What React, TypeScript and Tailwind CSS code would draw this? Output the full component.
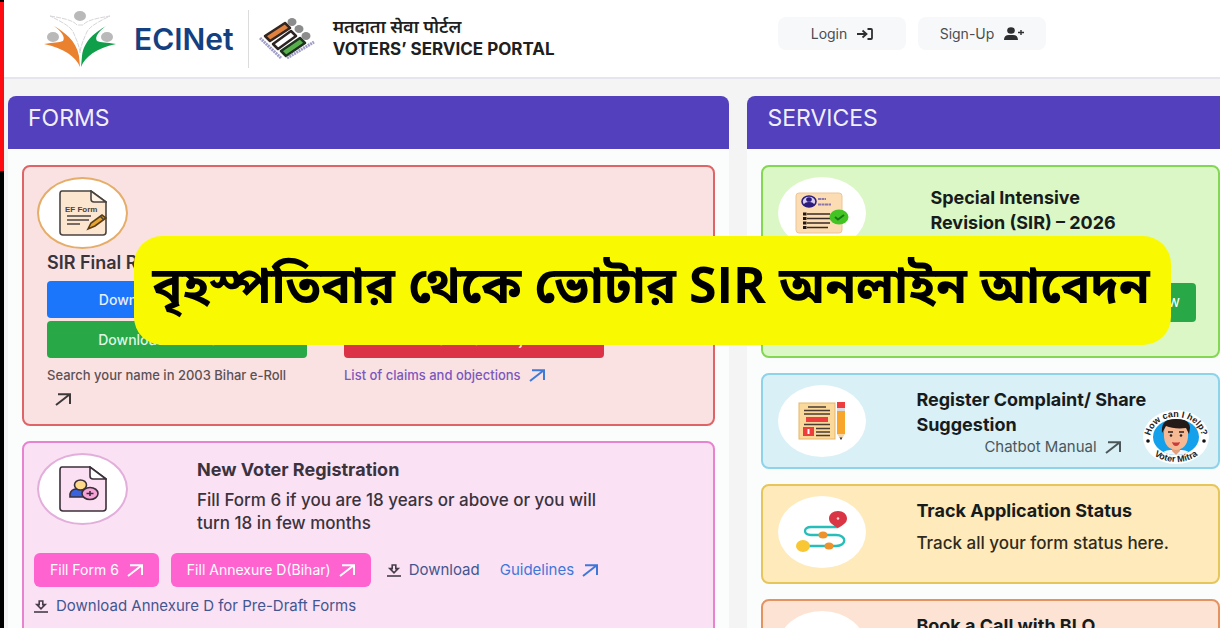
import type {ReactNode} from "react";
import clsx from "clsx";

function ArrowIcon({className}: { className?: string }) {
    return (
        <svg viewBox="0 0 16 13" className={clsx("h-[13px] w-4 shrink-0", className)} fill="none" stroke="currentColor" strokeWidth="2" aria-hidden="true">
            <path d="M1 12 14.5 1.5M3 1.3h12V11" />
        </svg>
    );
}

function DownloadIcon() {
    return (
        <svg viewBox="0 0 14 13" className="h-[13px] w-3.5 shrink-0 text-[#463c4a]" fill="none" stroke="currentColor" aria-hidden="true">
            <path strokeWidth="1.6" d="M5.2 1h3.6v3.6h2.4L7 8.8 2.8 4.6h2.4z" />
            <path strokeWidth="1.6" d="M0 12h14" />
        </svg>
    );
}

function EciLogo() {
    return (
        <svg viewBox="0 0 72 58" className="h-[58px] w-[72px] shrink-0" aria-hidden="true">
            <g fill="#b9b9b9">
                <ellipse cx="36" cy="6" rx="6" ry="5" />
                <ellipse cx="9" cy="27" rx="6" ry="5" />
                <ellipse cx="63" cy="27" rx="6" ry="5" />
            </g>
            <path d="M6 6c12 2 23 4 27 9h6c4-5 15-7 27-9-12 6-22 11-24 18-3 7-5 11-6 19-1-8-3-12-6-19C28 17 18 12 6 6z" fill="#fff" stroke="#d6d6d6" strokeWidth="1" strokeDasharray="5 1" />
            <path d="M10 16c10 6 22 14 25 30l1 11C32 47 20 38 0 34c10-2 15-1 19-3 3-4-3-11-9-15z" fill="#e9812e" />
            <path d="M62 16c-10 6-22 14-24 30l-1 11c4-10 15-19 35-23-10-2-15-1-19-3-3-4 3-11 9-15z" fill="#0f9f4a" />
        </svg>
    );
}

function VoterLogo() {
    return (
        <svg viewBox="0 0 56 44" className="h-11 w-14 shrink-0" aria-hidden="true">
            <g fill="#8c8c8c">
                <ellipse cx="33" cy="5" rx="4.5" ry="4" />
                <ellipse cx="40" cy="12" rx="4.5" ry="4" />
                <ellipse cx="47" cy="19" rx="4.5" ry="4" />
            </g>
            <g strokeWidth="2.5" strokeLinejoin="round">
                <path d="m6 19 20-13 5 5-20 13z" fill="#e08140" stroke="#33251f" />
                <path d="m14 27 18-13 5 5-18 13z" fill="#fff" stroke="#2b2422" />
                <path d="m22 34 19-13 5 5-19 13z" fill="#58b04c" stroke="#1d331d" />
            </g>
            <path d="M1 21 22 41M28 41 55 25" fill="none" stroke="#a09dc8" strokeWidth="3" strokeDasharray="2 .7" />
        </svg>
    );
}

function EfFormIcon() {
    return (
        <svg viewBox="0 0 48 46" className="h-[46px] w-12" fill="none" stroke="#4a4441" strokeWidth="1.6" aria-hidden="true">
            <path d="M3 1h29l15 11v30q0 3-3 3H4q-3 0-3-3V4q0-3 2-3z" fill="#fde6d0" />
            <path d="M32 1v8q0 3 3 3h12z" fill="#fff3e6" />
            <text x="6" y="22" stroke="none" fill="#4a4441" className="font-['Liberation_Sans'] text-[8px] font-bold">EF Form</text>
            <path d="M8 26h24M8 30h22M8 34h13" />
            <path d="m29 39 3-6 11-8 4 3-11 8z" fill="#e7a52f" stroke="#5b3d13" />
            <path d="m41 26 4 4" />
        </svg>
    );
}

function NewVoterIcon() {
    return (
        <svg viewBox="0 0 48 46" className="h-[46px] w-12" fill="none" stroke="#3b3039" strokeWidth="1.6" aria-hidden="true">
            <path d="M3 1h28l16 12v29q0 3-3 3H4q-3 0-3-3V4q0-3 2-3z" fill="#fbdff2" />
            <path d="M31 1v9q0 3 3 3h13z" fill="#fff" />
            <path d="M11 31v-3q1-5 7-5h7v8z" fill="#3a62dd" />
            <ellipse cx="21.5" cy="19" rx="6" ry="5" fill="#ffd98a" />
            <ellipse cx="31" cy="27.5" rx="8" ry="6" fill="#f7a3d8" />
            <path d="M27.5 27.5h7M31 25v5" />
        </svg>
    );
}

function SirIcon() {
    return (
        <svg viewBox="0 0 54 42" className="h-[42px] w-[54px]" aria-hidden="true">
            <rect x="1" y="1" width="46" height="40" rx="3" fill="#fbdcb3" stroke="#edc596" />
            <ellipse cx="14" cy="9.5" rx="7" ry="5.5" fill="#d8cdf0" stroke="#2b1c7d" strokeWidth="1.6" />
            <ellipse cx="14" cy="7.5" rx="2.8" ry="2.3" fill="#2b1c7d" />
            <path d="M8.5 13q1-3 5.5-3t5.5 3q-2 2-5.5 2t-5.5-2z" fill="#2b1c7d" />
            <path d="M23 7h8M23 12.5h13" stroke="#8d76ac" strokeWidth="2.2" strokeDasharray="3 .5" />
            <path d="M12 22h23M12 26.5h23M12 31h23M12 35.5h21" stroke="#3a2a24" strokeWidth="1.3" />
            <path d="M8 22h3.5M8 26.5h3.5M8 31h3.5M8 35.5h3.5" stroke="#241613" strokeWidth="2.8" />
            <ellipse cx="44" cy="25" rx="9.5" ry="7.5" fill="#43c324" />
            <path d="m40 25 3 2.5 6-4.5" fill="none" stroke="#187a12" strokeWidth="2" />
        </svg>
    );
}

function ComplaintIcon() {
    return (
        <svg viewBox="0 0 48 38" className="h-[38px] w-12" aria-hidden="true">
            <rect x="1" y="1" width="36" height="36" fill="#fbd99a" stroke="#e6b56d" />
            <path d="M10 5h18M6 8.5h26M6 12h26M6 22.5h26M18 26.5h14M18 30h14M18 33.5h14" stroke="#4a3b33" strokeWidth="1.4" />
            <path d="M8 15h22v5H8zM5 25h11v9H5z" fill="#ee3d3d" />
            <path d="M10.5 27v5" stroke="#fff" strokeWidth="2" />
            <path d="M39 0h8v6h-8z" fill="#ee3d3d" />
            <path d="M39 6h8v3h-8z" fill="#d9dbe0" />
            <path d="M39 9h8v23h-8z" fill="#f8a62b" />
            <path d="M39 32h8l-4 6z" fill="#f5d5ab" />
            <path d="M41.5 35.5h3L43 38z" fill="#333" />
        </svg>
    );
}

function TrackIcon() {
    return (
        <svg viewBox="0 0 52 42" className="h-[42px] w-[52px]" aria-hidden="true">
            <path d="M42 16H15c-8 0-8 8 0 8h25c11 0 11 11 0 11H8" fill="none" stroke="#27bdb8" strokeWidth="2.4" />
            <path d="M42 17c-5-3-9-5-9-9.5C33 3 37 0 42 0s9 3 9 7.5c0 4.5-4 6.5-9 9.5z" fill="#d93544" />
            <circle cx="42" cy="7.5" r="1.3" fill="#fbd1d1" />
            <ellipse cx="7" cy="35" rx="7" ry="6" fill="#f8c733" />
            <ellipse cx="27" cy="24" rx="4.5" ry="3.5" fill="#ee932c" />
            <ellipse cx="33" cy="35" rx="4.5" ry="3.5" fill="#ee932c" />
        </svg>
    );
}

function ChatbotButton() {
    return (
        <button type="button" aria-label="Voter Mitra" className="absolute right-2 bottom-0.5">
            <svg viewBox="0 0 68 56" className="h-14 w-[68px]">
                <defs>
                    <path id="badge-top" d="M8 30a26 22 0 0 1 52 0" />
                    <path id="badge-bottom" d="M4 31a30 22 0 0 0 60 0" />
                    <clipPath id="badge-face"><ellipse cx="34" cy="28" rx="23" ry="18" /></clipPath>
                </defs>
                <ellipse cx="34" cy="28" rx="33" ry="27" fill="#fff" />
                <ellipse cx="34" cy="28" rx="23" ry="18" fill="#14a0ea" />
                <g clipPath="url(#badge-face)">
                    <path d="M16 51q2-9 12-10h12q10 1 12 10z" fill="#f3f6fb" />
                    <path d="M30 37h8v5l-4 4-4-4z" fill="#e3a07c" />
                    <path d="M22 23q0-11 12-11t12 11v5q-1 12-12 13-11-1-12-13z" fill="#f6b994" />
                    <path d="M20 24c-1-10 4-14 11-14 9-2 17 2 17 9l-1 6-3-6c-8 1-15 0-20-2z" fill="#241a18" />
                    <path d="M26 23h5M37 23h5" stroke="#2e211e" strokeWidth="1.3" />
                    <circle cx="29" cy="26.5" r="1.3" fill="#2e211e" />
                    <circle cx="39" cy="26.5" r="1.3" fill="#2e211e" />
                    <path d="M30 33q4 1 8 0-1 4-4 4t-4-4z" fill="#c93a3a" />
                </g>
                <circle cx="6" cy="32" r="1.8" fill="#111" />
                <circle cx="62" cy="32" r="1.8" fill="#111" />
                <text fill="#222" textAnchor="middle" className="font-['Liberation_Sans'] text-[9px] font-bold">
                    <textPath href="#badge-top" startOffset="50%">How can I help?</textPath>
                </text>
                <text fill="#222" textAnchor="middle" className="font-['Liberation_Sans'] text-[9px] font-bold">
                    <textPath href="#badge-bottom" startOffset="50%">Voter Mitra</textPath>
                </text>
            </svg>
        </button>
    );
}

function IconDisc({children, className}: { children?: ReactNode, className?: string }) {
    return (
        <div className={clsx("flex h-[72px] shrink-0 items-center justify-center rounded-[50%] bg-white", className)}>
            {children}
        </div>
    );
}

function Panel({title, children, className, bodyClassName}: { title: string, children: ReactNode, className: string, bodyClassName?: string }) {
    return (
        <section className={clsx("min-w-0 overflow-hidden bg-[#fafdfc]", className)}>
            <h2 className="h-[53px] bg-[#5340bd] px-5 pt-1 text-[23px] leading-9 text-[#f1effb]">{title}</h2>
            <div className={clsx("flex flex-col gap-[15px] py-4 pl-3.5", bodyClassName)}>{children}</div>
        </section>
    );
}

function ServiceCard({icon, title, children, className, textClassName}: { icon?: ReactNode, title: ReactNode, children?: ReactNode, className: string, textClassName: string }) {
    return (
        <article className={clsx("relative flex rounded-lg border-2 pr-3.5 pl-[15px]", className)}>
            <IconDisc className="mt-2.5 w-[88px]">{icon}</IconDisc>
            <div className={clsx("min-w-0 flex-1", textClassName)}>
                <h3 className="text-lg leading-[25px] font-bold text-[#171b1c]">{title}</h3>
                {children}
            </div>
        </article>
    );
}

function Header() {
    return (
        <header className="flex h-[79px] items-center border-b-2 border-[#e6e5ee] bg-white pr-[174px] pl-10">
            <EciLogo />
            <span className="ml-[18px] text-3xl font-semibold text-[#143f80]">ECINet</span>
            <div className="mr-2.5 ml-3.5 h-[58px] w-px bg-[#dcdcdc]" />
            <VoterLogo />
            <div className="ml-[18px] flex-1 pb-0.5 text-[#202020]">
                <p className="text-lg leading-[22px] font-semibold">मतदाता सेवा पोर्टल</p>
                <h1 className="text-[17px] leading-[22px] font-bold">VOTERS’ SERVICE PORTAL</h1>
            </div>
            <nav className="mb-2.5 flex gap-3 text-sm text-[#4b4d50]">
                <a href="#login" className="flex h-[33px] w-32 items-center justify-center gap-2.5 rounded-lg bg-[#f7f8fa]">
                    Login
                    <svg viewBox="0 0 16 12" className="h-3 w-4" fill="none" stroke="#2d2f31" strokeWidth="1.8" aria-hidden="true">
                        <path d="M0 6h9M5.5 2.5 9.5 6l-4 3.5M10.5 1H14q1 0 1 1v8q0 1-1 1h-3.5" />
                    </svg>
                </a>
                <a href="#signup" className="flex h-[33px] w-32 items-center justify-center gap-2.5 rounded-lg bg-[#f7f8fa]">
                    Sign-Up
                    <svg viewBox="0 0 20 13" className="h-[13px] w-5" fill="#2d2f31" aria-hidden="true">
                        <ellipse cx="7" cy="3.5" rx="3.8" ry="3.3" />
                        <path d="M0 13q0-5 5-5h4q5 0 5 5z" />
                        <path d="M14 5.5h6M17 3v5" stroke="#2d2f31" strokeWidth="1.4" />
                    </svg>
                </a>
            </nav>
        </header>
    );
}

function FinalRollCard() {
    return (
        <article className="h-[261px] rounded-lg border-2 border-[#de6467] bg-[#fae2e3] px-[13px] pt-2.5 text-[13px] font-medium">
            <IconDisc className="w-[91px] border-2 border-[#e5ad68]"><EfFormIcon /></IconDisc>
            <div className="ml-2.5">
                <h3 className="pb-1 text-lg leading-7 font-semibold text-[#39343a]">SIR Final Roll 2025</h3>
                <div className="grid grid-cols-[260px_260px] gap-x-[37px] gap-y-[3px] text-sm">
                    <button type="button" className="h-[37px] rounded-sm bg-[#1b76fb] text-[#e5effd]">Download SIR Final Roll</button>
                    <span />
                    <button type="button" className="h-[37px] rounded-sm bg-[#29a847] text-[#dff6e5]">Download SIR Draft Roll</button>
                    <button type="button" className="h-[37px] rounded-sm bg-[#dc3248] text-[#fbe5e8]">Submit claims and objections</button>
                </div>
                <div className="mt-[7px] grid grid-cols-[260px_260px] gap-x-[37px] leading-5">
                    <a href="#search" className="text-[#5c5153]">
                        Search your name in 2003 Bihar e-Roll
                        <ArrowIcon className="mt-2 ml-2 block text-[#3f383b]" />
                    </a>
                    <a href="#claims" className="flex h-5 items-center gap-2 text-[#7b58bd]">List of claims and objections <ArrowIcon className="text-[#3e7bd9]" /></a>
                </div>
            </div>
        </article>
    );
}

function NewVoterCard() {
    return (
        <article className="min-h-[261px] rounded-lg border-2 border-[#e884cf] bg-[#fbe1f4] px-2.5 pt-2.5">
            <div className="flex pl-[3px]">
                <IconDisc className="w-[91px] border-2 border-[#e2aedb]"><NewVoterIcon /></IconDisc>
                <div className="max-w-[500px] pl-[69px] text-[#3a333d]">
                    <h3 className="pt-1 text-lg leading-[26px] font-bold">New Voter Registration</h3>
                    <p className="pt-1.5 text-[17px] leading-[23px] font-medium">Fill Form 6 if you are 18 years or above or you will turn 18 in few months</p>
                </div>
            </div>
            <div className="mt-[18px] flex items-center gap-3 text-[15px] text-[#42568f]">
                <a href="#form6" className="flex h-[34px] items-center gap-2 rounded-md bg-[#fe63d0] px-4 text-sm text-white">Fill Form 6 <ArrowIcon /></a>
                <a href="#annexure" className="flex h-[34px] items-center gap-2 rounded-md bg-[#fe63d0] px-4 text-sm text-white">Fill Annexure D(Bihar) <ArrowIcon /></a>
                <a href="#download" className="ml-1 flex items-center gap-2"><DownloadIcon /> Download</a>
                <a href="#guidelines" className="ml-2 flex items-center gap-2 text-[#3f77d9]">Guidelines <ArrowIcon /></a>
            </div>
            <a href="#predraft" className="mt-2 flex items-center gap-2 text-[15px] text-[#42568f]"><DownloadIcon /> Download Annexure D for Pre-Draft Forms</a>
        </article>
    );
}

export default function App() {
    return (
        <div className="relative flex h-screen overflow-hidden bg-white font-[Inter,'Noto_Sans_Devanagari','Noto_Sans_Bengali',sans-serif]">
            <div className="flex w-1 shrink-0 flex-col bg-black pt-0.5">
                <div className="h-[169px] bg-[#fe0b12]" />
            </div>
            <div className="min-w-0 flex-1">
                <Header />
                <main className="grid grid-cols-[29fr_19fr] gap-[18px] bg-[#f4f4f5] pt-[17px] pl-1">
                    <Panel title="FORMS" className="rounded-t-lg" bodyClassName="pr-3.5">
                        <FinalRollCard />
                        <NewVoterCard />
                    </Panel>
                    <Panel title="SERVICES" className="rounded-tl-lg">
                        <ServiceCard
                            icon={<SirIcon />}
                            title={<>Special Intensive<br />Revision (SIR) – 2026</>}
                            className="h-[193px] border-[#83d752] bg-[#dbf7c5]"
                            textClassName="pt-[18px] pl-16"
                        >
                            <button type="button" className="mt-12 mr-2 ml-auto block h-[39px] rounded-sm bg-[#29a847] px-4 text-[15px] text-white">View</button>
                        </ServiceCard>
                        <ServiceCard icon={<ComplaintIcon />} title="Register Complaint/ Share Suggestion" className="h-24 border-[#8dd3ea] bg-[#d9f0f7]" textClassName="pt-3 pl-[50px]">
                            <a href="#manual" className="ml-[68px] flex items-center gap-2 text-[15px] leading-5 text-[#4c5759]">Chatbot Manual <ArrowIcon /></a>
                            <ChatbotButton />
                        </ServiceCard>
                        <ServiceCard icon={<TrackIcon />} title="Track Application Status" className="h-[100px] border-[#e6c55b] bg-[#feeabb]" textClassName="pt-3 pl-[50px]">
                            <p className="pt-2 text-[17px] leading-6 font-medium text-[#2f2a20]">Track all your form status here.</p>
                        </ServiceCard>
                        <ServiceCard title="Book a Call with BLO" className="h-[100px] border-[#e59261] bg-[#fde3d3]" textClassName="pt-3 pl-[50px]" />
                    </Panel>
                </main>
            </div>
            <div className="absolute top-[236px] right-[4%] left-[11%] flex h-[109px] items-center rounded-[28px] bg-[#f9f902] pb-3 pl-[18px]">
                <p className="font-['Open_Sans','Noto_Sans_Bengali',sans-serif] text-[50px] font-bold whitespace-nowrap text-black">বৃহস্পতিবার থেকে ভোটার SIR অনলাইন আবেদন</p>
            </div>
        </div>
    );
}
